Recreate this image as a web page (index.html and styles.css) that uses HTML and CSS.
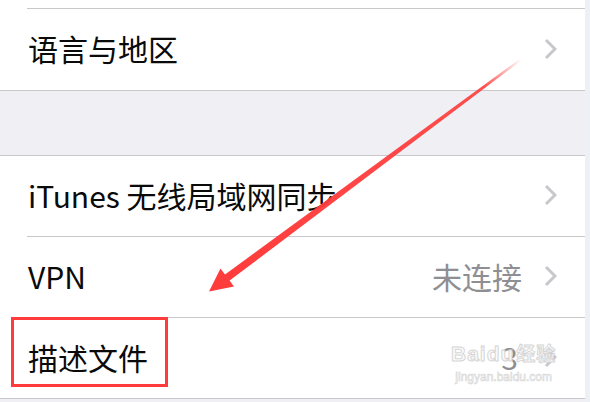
FILE: index.html
```html
<!DOCTYPE html>
<html lang="zh-CN">
<head>
  <meta charset="UTF-8">
  <meta name="viewport" content="width=device-width, initial-scale=1.0">
  <title>通用</title>
  <link rel="stylesheet" href="styles.css">
</head>
<body>

  <div class="screen">
    <div class="list">

      <div class="group">
        <div class="cell"><div class="cell-inner stub"></div></div>
        <div class="cell last">
          <div class="cell-inner">
            <span class="title">语言与地区</span>
            <svg class="chevron" viewBox="0 0 13 22"><path d="M2 2 L11 11 L2 20"/></svg>
          </div>
        </div>
      </div>

      <div class="spacer"></div>

      <div class="group top-line">
        <div class="cell">
          <div class="cell-inner">
            <span class="title">iTunes 无线局域网同步</span>
            <svg class="chevron" viewBox="0 0 13 22"><path d="M2 2 L11 11 L2 20"/></svg>
          </div>
        </div>
        <div class="cell">
          <div class="cell-inner">
            <span class="title">VPN</span>
            <span class="detail">未连接</span>
            <svg class="chevron" viewBox="0 0 13 22"><path d="M2 2 L11 11 L2 20"/></svg>
          </div>
        </div>
        <div class="cell last">
          <div class="cell-inner short">
            <span class="title">描述文件</span>
            <span class="detail count">3</span>
            <svg class="chevron" viewBox="0 0 13 22"><path d="M2 2 L11 11 L2 20"/></svg>
          </div>
        </div>
      </div>

    </div>
    <div class="edge"></div>
  </div>

  <!-- annotations drawn over the screenshot -->
  <div class="mark-box"></div>

  <div class="watermark">
    <div class="wm-logo">Bai<span class="wm-d">d</span>u<span class="wm-cn">经验</span></div>
    <div class="wm-url">jingyan.baidu.com</div>
  </div>

  <svg class="arrow" viewBox="0 0 590 402" width="590" height="402">
    <defs>
      <linearGradient id="fade" gradientUnits="userSpaceOnUse" x1="521" y1="59" x2="209" y2="291">
        <stop offset="0" stop-color="#ff3b3b" stop-opacity="0"/>
        <stop offset="0.12" stop-color="#ff3b3b" stop-opacity="0.9"/>
        <stop offset="1" stop-color="#ff3b3b"/>
      </linearGradient>
    </defs>
    <polygon fill="url(#fade)" points="521,58 522,60 229.6,280.6 234,286.5 209,291.5 220.5,268.5 225,274.5"/>
  </svg>

</body>
</html>
```

FILE: styles.css
```css
body {
  margin: 0;
  width: 590px;
  height: 402px;
  overflow: hidden;
  position: relative;
  background-color: #efeff4;
  font-family: 'Noto Sans CJK SC', 'Liberation Sans', sans-serif;
  color: #0a0a0a;
}
.screen {
  display: flex;
  height: 402px;
}
.list {
  flex: 1;
  background-color: #efeff4;
}
.edge {
  width: 5px;
  background-color: #eff0f5;
}
.group {
  background-color: #fff;
  border-bottom: 1px solid #c8c7cc;
}
.group.top-line {
  border-top: 1px solid #c8c7cc;
}
.spacer {
  height: 64px;
}
.cell {
  padding-left: 27px;
}
.cell-inner {
  height: 80px;
  display: flex;
  align-items: center;
  padding-right: 28px;
  border-bottom: 1px solid #c8c7cc;
}
.cell.last .cell-inner {
  height: 81px;
  border-bottom: none;
}
.cell.last .cell-inner.short {
  height: 80px;
}
.cell-inner.stub {
  height: 8px;
}
.title {
  flex: 1;
  font-size: 30px;
  line-height: 1;
  padding-left: 1px;
  margin-top: -3px;
}
.detail {
  font-size: 30px;
  line-height: 1;
  color: #8e8e93;
  margin-right: 22px;
  margin-top: -3px;
}
.detail.count {
  margin-right: 26px;
}
.chevron {
  width: 13px;
  height: 22px;
  fill: none;
  stroke: #c7c7cc;
  stroke-width: 3;
  margin-top: -2px;
}
.mark-box {
  position: absolute;
  left: 11px;
  top: 317px;
  width: 157px;
  height: 70px;
  box-sizing: border-box;
  border: 3px solid #ff3b3b;
}
.watermark {
  position: absolute;
  left: 451px;
  top: 339px;
  color: #fbfbfb;
  -webkit-text-stroke: 1px #d6d6d6;
  font-family: 'Liberation Sans', sans-serif;
  text-align: center;
}
.wm-logo {
  font-size: 21px;
  font-weight: bold;
  line-height: 28px;
  letter-spacing: 1px;
}
.wm-cn {
  font-family: 'Noto Sans CJK SC', sans-serif;
  font-size: 19px;
  margin-left: 2px;
}
.wm-url {
  font-size: 12px;
  line-height: 14px;
  margin-top: 2px;
  -webkit-text-stroke: 0.6px #d6d6d6;
}
.arrow {
  position: absolute;
  left: 0;
  top: 0;
}
```
